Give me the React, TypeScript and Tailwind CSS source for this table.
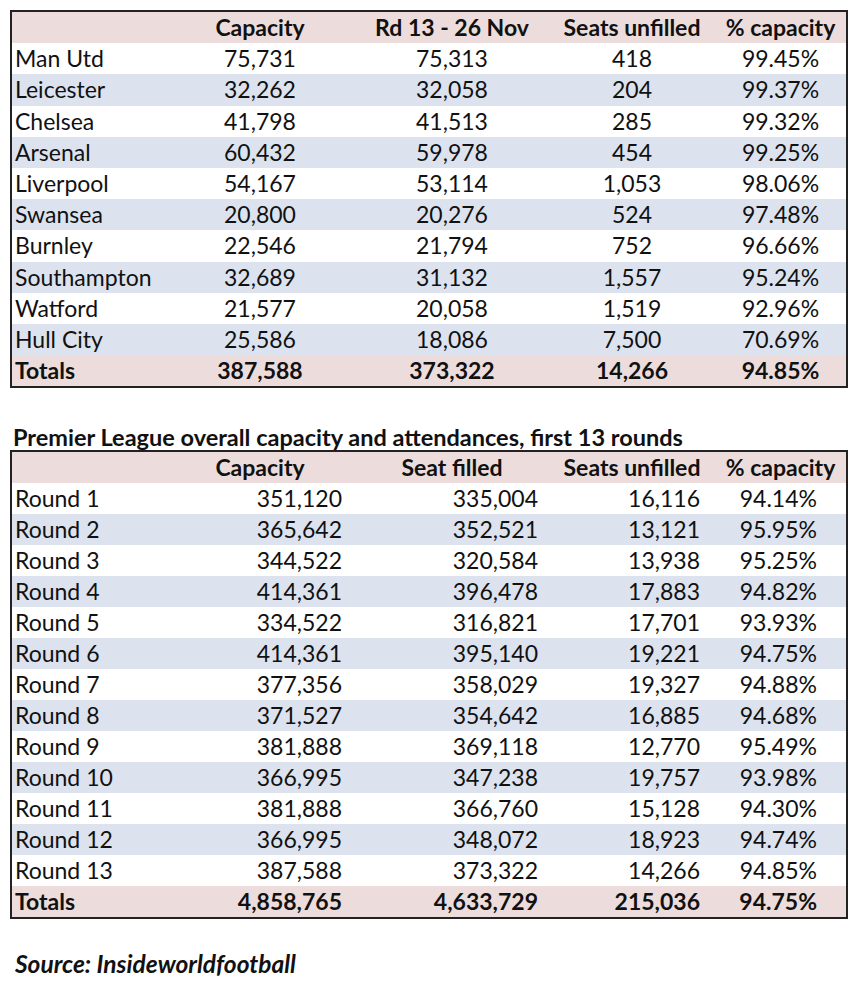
import React from 'react';

type Row = [string, string, string, string, string];

const clubs: Row[] = [
  ['Man Utd', '75,731', '75,313', '418', '99.45%'],
  ['Leicester', '32,262', '32,058', '204', '99.37%'],
  ['Chelsea', '41,798', '41,513', '285', '99.32%'],
  ['Arsenal', '60,432', '59,978', '454', '99.25%'],
  ['Liverpool', '54,167', '53,114', '1,053', '98.06%'],
  ['Swansea', '20,800', '20,276', '524', '97.48%'],
  ['Burnley', '22,546', '21,794', '752', '96.66%'],
  ['Southampton', '32,689', '31,132', '1,557', '95.24%'],
  ['Watford', '21,577', '20,058', '1,519', '92.96%'],
  ['Hull City', '25,586', '18,086', '7,500', '70.69%'],
];

const rounds: Row[] = [
  ['Round 1', '351,120', '335,004', '16,116', '94.14%'],
  ['Round 2', '365,642', '352,521', '13,121', '95.95%'],
  ['Round 3', '344,522', '320,584', '13,938', '95.25%'],
  ['Round 4', '414,361', '396,478', '17,883', '94.82%'],
  ['Round 5', '334,522', '316,821', '17,701', '93.93%'],
  ['Round 6', '414,361', '395,140', '19,221', '94.75%'],
  ['Round 7', '377,356', '358,029', '19,327', '94.88%'],
  ['Round 8', '371,527', '354,642', '16,885', '94.68%'],
  ['Round 9', '381,888', '369,118', '12,770', '95.49%'],
  ['Round 10', '366,995', '347,238', '19,757', '93.98%'],
  ['Round 11', '381,888', '366,760', '15,128', '94.30%'],
  ['Round 12', '366,995', '348,072', '18,923', '94.74%'],
  ['Round 13', '387,588', '373,322', '14,266', '94.85%'],
];

// column grid shared by both tables
const cols = 'grid grid-cols-[153px_190px_194px_166px_131px] items-center';

function HeaderRow({ labels, h }: { labels: string[]; h: string }) {
  return (
    <div className={`${cols} ${h} bg-[#ecdddc] font-bold`}>
      <div />
      {labels.map((l) => (
        <div key={l} className="text-center whitespace-nowrap">{l}</div>
      ))}
    </div>
  );
}

export default function App() {
  return (
    <div className="w-[855px] h-[988px] bg-white text-[#111] text-[23px] leading-none" style={{ fontFamily: 'Lato, "Open Sans", sans-serif' }}>
      <div className="pt-[10px] pl-[10px]">
        {/* Table 1: clubs */}
        <div className="w-[838px] border-2 border-[#222]">
          <HeaderRow h="h-[31.2px]" labels={['Capacity', 'Rd 13 - 26 Nov', 'Seats unfilled', '% capacity']} />
          {clubs.map((r, i) => (
            <div key={r[0]} className={`${cols} h-[31.2px] ${i % 2 ? 'bg-[#dce3ef]' : 'bg-white'}`}>
              <div className="pl-[3px]">{r[0]}</div>
              <div className="text-center">{r[1]}</div>
              <div className="text-center">{r[2]}</div>
              <div className="text-center">{r[3]}</div>
              <div className="text-center">{r[4]}</div>
            </div>
          ))}
          <div className={`${cols} h-[31.2px] bg-[#ecdddc] font-bold`}>
            <div className="pl-[3px]">Totals</div>
            <div className="text-center">387,588</div>
            <div className="text-center">373,322</div>
            <div className="text-center">14,266</div>
            <div className="text-center">94.85%</div>
          </div>
        </div>

        <div className="mt-[38px] pl-[3px] font-bold text-[23.5px] whitespace-nowrap">
          Premier League overall capacity and attendances, first 13 rounds
        </div>

        {/* Table 2: rounds */}
        <div className="w-[838px] border-2 border-[#222]">
          <HeaderRow h="h-[31px]" labels={['Capacity', 'Seat filled', 'Seats unfilled', '% capacity']} />
          {rounds.map((r, i) => (
            <div key={r[0]} className={`${cols} h-[31px] ${i % 2 ? 'bg-[#dce3ef]' : 'bg-white'}`}>
              <div className="pl-[3px]">{r[0]}</div>
              <div className="text-right pr-[13px]">{r[1]}</div>
              <div className="text-right pr-[11px]">{r[2]}</div>
              <div className="text-right pr-[15px]">{r[3]}</div>
              <div className="text-right pr-[29px]">{r[4]}</div>
            </div>
          ))}
          <div className={`${cols} h-[31px] bg-[#ecdddc] font-bold`}>
            <div className="pl-[3px]">Totals</div>
            <div className="text-right pr-[13px]">4,858,765</div>
            <div className="text-right pr-[11px]">4,633,729</div>
            <div className="text-right pr-[15px]">215,036</div>
            <div className="text-right pr-[29px]">94.75%</div>
          </div>
        </div>

        <div className="mt-[33px] pl-[5px] font-bold italic text-[24.5px]">Source: Insideworldfootball</div>
      </div>
    </div>
  );
}
